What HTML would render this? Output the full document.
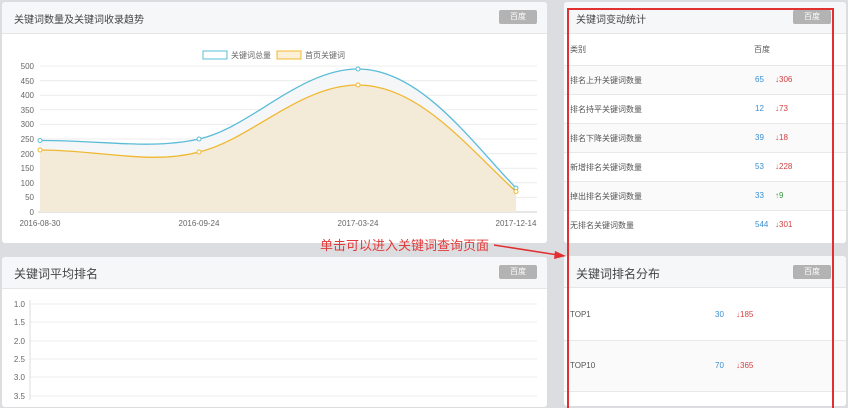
<!DOCTYPE html>
<html><head><meta charset="utf-8"><style>
*{margin:0;padding:0;box-sizing:border-box}
body{width:848px;height:400px;background:#dcdde0;font-family:"Liberation Sans","Noto Sans CJK SC",sans-serif;position:relative;overflow:hidden;color:#333}
.card{position:absolute;background:#fff;border-radius:3px}
.hd{position:absolute;left:0;right:0;top:0;height:32px;background:#f6f7f9;border-bottom:1px solid #e6e6e6;border-radius:3px 3px 0 0}
.hd .t{position:absolute;left:12px;top:9px;font-size:10px;color:#444}
.badge{position:absolute;top:8px;width:38px;height:14px;background:#b3b3b3;color:#fff;font-size:8px;text-align:center;line-height:14px;border-radius:2px}
.a{position:absolute;font-size:8px;color:#555}
.n{position:absolute;font-size:8px;color:#3a8fd0}
.d{position:absolute;font-size:8px;color:#d04040}
.line{position:absolute;left:0;right:0;height:1px;background:#e8e8e8}
.row{position:absolute;left:0;right:0;background:#fafafa}
</style></head><body>
<div class="card" style="left:2px;top:2px;width:545px;height:241px">
<div class="hd"><div class="t">关键词数量及关键词收录趋势</div><div class="badge" style="left:497px">百度</div></div>
</div>
<svg style="position:absolute;left:0;top:0" width="560" height="240" font-family="Liberation Sans" font-size="8" fill="#666">
<g stroke="#ececec" stroke-width="1">
<line x1="40" x2="537" y1="66" y2="66"/><line x1="40" x2="537" y1="80.6" y2="80.6"/><line x1="40" x2="537" y1="95.2" y2="95.2"/><line x1="40" x2="537" y1="109.8" y2="109.8"/><line x1="40" x2="537" y1="124.4" y2="124.4"/><line x1="40" x2="537" y1="139" y2="139"/><line x1="40" x2="537" y1="153.6" y2="153.6"/><line x1="40" x2="537" y1="168.2" y2="168.2"/><line x1="40" x2="537" y1="182.8" y2="182.8"/><line x1="40" x2="537" y1="197.4" y2="197.4"/>
</g>
<line x1="38" x2="537" y1="212" y2="212" stroke="#ccc"/>
<g text-anchor="end">
<text x="34" y="69">500</text><text x="34" y="84">450</text><text x="34" y="98">400</text><text x="34" y="113">350</text><text x="34" y="127">300</text><text x="34" y="142">250</text><text x="34" y="157">200</text><text x="34" y="171">150</text><text x="34" y="186">100</text><text x="34" y="200">50</text><text x="34" y="215">0</text>
</g>
<g text-anchor="middle"><text x="40" y="226">2016-08-30</text><text x="199" y="226">2016-09-24</text><text x="358" y="226">2017-03-24</text><text x="516" y="226">2017-12-14</text></g>
<path d="M40 140.5 C100 140,150 150,199 139 C250 128,300 69,358 69 C420 69,470 140,516 188 L516 212 L40 212Z" fill="#f5f6f8"/>
<path d="M40 150 C100 150,150 165,199 152 C250 140,300 85,358 85 C420 85,470 150,516 191.5 L516 212 L40 212Z" fill="#f3ead8"/>
<path d="M40 140.5 C100 140,150 150,199 139 C250 128,300 69,358 69 C420 69,470 140,516 188" fill="none" stroke="#5bbcd8" stroke-width="1.3"/>
<path d="M40 150 C100 150,150 165,199 152 C250 140,300 85,358 85 C420 85,470 150,516 191.5" fill="none" stroke="#f0b830" stroke-width="1.3"/>
<g fill="#fff" stroke="#5bbcd8"><circle cx="40" cy="140.5" r="2"/><circle cx="199" cy="139" r="2"/><circle cx="358" cy="69" r="2"/><circle cx="516" cy="188" r="2"/></g>
<g fill="#fff" stroke="#f0b830"><circle cx="40" cy="150" r="2"/><circle cx="199" cy="152" r="2"/><circle cx="358" cy="85" r="2"/><circle cx="516" cy="191.5" r="2"/></g>
<rect x="203" y="51" width="24" height="8" fill="#fff" stroke="#5bbcd8"/><text x="231" y="58" font-family="Noto Sans CJK SC">关键词总量</text>
<rect x="277" y="51" width="24" height="8" fill="#fbf1d8" stroke="#f0b830"/><text x="305" y="58" font-family="Noto Sans CJK SC">首页关键词</text>
</svg>
<div class="card" style="left:2px;top:257px;width:545px;height:150px">
<div class="hd"><div class="t" style="font-size:12px;top:8px">关键词平均排名</div><div class="badge" style="left:497px">百度</div></div>
</div>
<svg style="position:absolute;left:0;top:290px" width="560" height="110" font-family="Liberation Sans" font-size="8" fill="#666">
<g stroke="#ececec"><line x1="30" x2="537" y1="14" y2="14"/><line x1="30" x2="537" y1="32" y2="32"/><line x1="30" x2="537" y1="51" y2="51"/><line x1="30" x2="537" y1="69" y2="69"/><line x1="30" x2="537" y1="87" y2="87"/><line x1="30" x2="537" y1="106" y2="106"/></g>
<line x1="30" x2="30" y1="10" y2="110" stroke="#ddd"/>
<g text-anchor="end"><text x="25" y="17">1.0</text><text x="25" y="35">1.5</text><text x="25" y="54">2.0</text><text x="25" y="72">2.5</text><text x="25" y="90">3.0</text><text x="25" y="109">3.5</text></g>
</svg>
<div class="card" style="left:564px;top:2px;width:282px;height:241px">
<div class="hd"><div class="t">关键词变动统计</div><div class="badge" style="left:229px">百度</div></div>
<div class="a" style="left:6px;top:42px">类别</div><div class="a" style="left:190px;top:42px">百度</div>
<div class="line" style="top:63px"></div>
<div class="row" style="top:64px;height:28px"></div><div class="a" style="left:6px;top:73px">排名上升关键词数量</div><div class="n" style="left:191px;top:73px">65</div><div class="d" style="left:211px;top:73px">↓306</div>
<div class="line" style="top:92px"></div><div class="a" style="left:6px;top:102px">排名持平关键词数量</div><div class="n" style="left:191px;top:102px">12</div><div class="d" style="left:211px;top:102px">↓73</div>
<div class="line" style="top:121px"></div><div class="row" style="top:122px;height:28px"></div><div class="a" style="left:6px;top:131px">排名下降关键词数量</div><div class="n" style="left:191px;top:131px">39</div><div class="d" style="left:211px;top:131px">↓18</div>
<div class="line" style="top:150px"></div><div class="a" style="left:6px;top:160px">新增排名关键词数量</div><div class="n" style="left:191px;top:160px">53</div><div class="d" style="left:211px;top:160px">↓228</div>
<div class="line" style="top:179px"></div><div class="row" style="top:180px;height:28px"></div><div class="a" style="left:6px;top:189px">掉出排名关键词数量</div><div class="n" style="left:191px;top:189px">33</div><div class="d" style="left:211px;top:189px;color:#3a9a40">↑9</div>
<div class="line" style="top:208px"></div><div class="a" style="left:6px;top:218px">无排名关键词数量</div><div class="n" style="left:191px;top:218px">544</div><div class="d" style="left:211px;top:218px">↓301</div>
</div>
<div class="card" style="left:564px;top:256px;width:282px;height:150px">
<div class="hd"><div class="t" style="top:9px;font-size:12px">关键词排名分布</div><div class="badge" style="left:229px;top:9px">百度</div></div>
<div class="a" style="left:6px;top:54px">TOP1</div><div class="n" style="left:151px;top:54px">30</div><div class="d" style="left:172px;top:54px">↓185</div>
<div class="line" style="top:84px"></div><div class="row" style="top:85px;height:50px"></div>
<div class="a" style="left:6px;top:105px">TOP10</div><div class="n" style="left:151px;top:105px">70</div><div class="d" style="left:172px;top:105px">↓365</div>
<div class="line" style="top:135px"></div>
</div>
<div style="position:absolute;left:567px;top:8px;width:267px;height:400px;border:2px solid #e03030;border-bottom:none"></div>
<div style="position:absolute;left:320px;top:237px;font-size:13px;color:#e03a3a;font-family:'Noto Sans CJK SC',sans-serif;line-height:16px">单击可以进入关键词查询页面</div>
<svg style="position:absolute;left:0;top:0" width="848" height="400"><line x1="494" y1="245" x2="558" y2="255" stroke="#e03030" stroke-width="1.5"/><polygon points="566,256 555,251 554,259" fill="#e03030"/></svg>
</body></html>
